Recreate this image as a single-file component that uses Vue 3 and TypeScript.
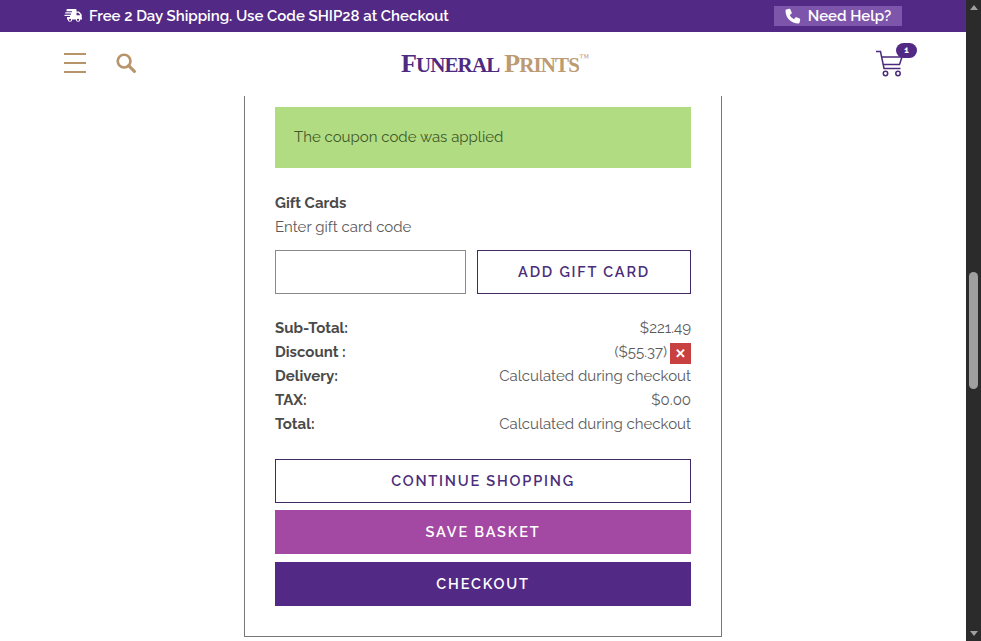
<script setup lang="ts">
const rows = [
  { label: 'Sub-Total:', value: '$221.49' },
  { label: 'Discount :', value: '($55.37)', remove: true },
  { label: 'Delivery:', value: 'Calculated during checkout' },
  { label: 'TAX:', value: '$0.00' },
  { label: 'Total:', value: 'Calculated during checkout' },
]
</script>

<template>
  <div class="window">
    <div class="page">
      <div class="topbar">
        <div class="ship">
          <svg class="truck" width="18" height="14" viewBox="0 0 18 14"><path fill="#fff" d="M3.500 0h8c.6 0 1 .4 1 1v1.500h2c.4 0 .7.100 1 .4l1.800 2c.2.300.4.600.4 1V9h.3v1.500h-1.700a2.200 2.200 0 0 1-4.400 0H8.200a2.200 2.200 0 0 1-4.400 0H3v-2.500h3v-1H.5V5.700H7V4.600H1.300V3.300H8V2.200H2.500V1c0-.6.400-1 1-1z"/><circle cx="6" cy="10.800" r="1.100" fill="#522a85"/><circle cx="14" cy="10.800" r="1.100" fill="#522a85"/><path fill="#522a85" d="M12.500 3.800h1.800l1.700 1.900v.5h-3.500z"/></svg>
          <span>Free 2 Day Shipping. Use Code SHIP28 at Checkout</span>
        </div>
        <div class="help">
          <svg width="16" height="16" viewBox="0 0 16 16"><path fill="#fff" d="M4.200.8 1.300 1.500C.8 1.600.5 2 .5 2.500.5 10 6 15.500 13.500 15.500c.5 0 .9-.3 1-.8l.7-2.900c.1-.5-.1-1-.6-1.200l-3.100-1.300c-.4-.2-.9-.1-1.200.3L9 11.200C6.900 10.100 5.900 9.100 4.800 7l1.600-1.300c.4-.3.500-.8.300-1.200L5.400 1.400C5.200.9 4.700.7 4.200.8z"/></svg>
          <span>Need Help?</span>
        </div>
      </div>
      <header class="header">
        <div class="left-icons">
          <div class="burger"><i></i><i></i><i></i></div>
          <svg class="search" width="20" height="20" viewBox="0 0 21 21"><circle cx="8.500" cy="8.500" r="6.700" fill="none" stroke="#b8946a" stroke-width="2.800"/><path d="m13.300 13.300 6 6" stroke="#b8946a" stroke-width="3.200" stroke-linecap="round"/></svg>
        </div>
        <div class="logo">
          <span class="p">F<small>UNERAL</small></span>
          <span class="g">P<small>RINTS</small><sup>™</sup></span>
        </div>
        <div class="cart">
          <svg width="30" height="28" viewBox="0 0 30 28" fill="none" stroke="#4b2a7b" stroke-width="1.500"><path d="M1 1.500h4.500l3.500 17h16.500M7 7h20l-2.500 7.500H8.500"/><circle cx="10.500" cy="23.500" r="2.200"/><circle cx="23" cy="23.500" r="2.200"/></svg>
          <span class="badge">1</span>
        </div>
      </header>
      <main class="main">
        <section class="card">
          <div class="notice">The coupon code was applied</div>
          <div class="gift-title">Gift Cards</div>
          <div class="gift-sub">Enter gift card code</div>
          <div class="gift-row">
            <input class="gift-input" type="text" />
            <button class="btn outline gift-btn">ADD GIFT CARD</button>
          </div>
          <div class="totals">
            <div v-for="row in rows" :key="row.label" class="row">
              <strong>{{ row.label }}</strong>
              <span class="val">{{ row.value }}<span v-if="row.remove" class="remove">✕</span></span>
            </div>
          </div>
          <div class="actions">
            <button class="btn outline">CONTINUE SHOPPING</button>
            <button class="btn save">SAVE BASKET</button>
            <button class="btn checkout">CHECKOUT</button>
          </div>
        </section>
      </main>
    </div>
    <div class="scrollbar">
      <div class="arrow up"></div>
      <div class="track"><div class="thumb"></div></div>
      <div class="arrow down"></div>
    </div>
  </div>
</template>

<style>
html, body { margin: 0; overflow: hidden; }
</style>

<style scoped>
.window { width: 981px; height: 641px; display: flex; overflow: hidden; background: #fff; font-family: Raleway, "Open Sans", Lato, "Liberation Sans", sans-serif; color: #4a4a4a; }
.page { width: 966px; flex: none; display: flex; flex-direction: column; }
.topbar { height: 32px; flex: none; background: #522a85; color: #fff; display: flex; align-items: center; justify-content: space-between; padding: 0 64px; font: 600 15px Raleway, Lato, sans-serif; }
.ship { display: flex; align-items: center; gap: 7px; }
.help { width: 128px; height: 20px; background: #7d55ab; display: flex; align-items: center; justify-content: center; gap: 7px; }
.header { height: 64px; flex: none; padding: 0 49px 0 64px; display: grid; grid-template-columns: 337px auto 1fr; align-items: center; }
.left-icons { display: flex; align-items: center; gap: 30px; margin-top: -3px; }
.burger { width: 22px; display: flex; flex-direction: column; gap: 7px; }
.burger i { display: block; height: 2px; background: #b8946a; }
.logo { font: 700 26px "Liberation Serif", serif; letter-spacing: -.9px; display: flex; gap: 5px; margin-top: -1px; }
.logo small { font-size: 21px; }
.logo sup { font-size: 10px; font-weight: 400; letter-spacing: 0; vertical-align: 11px; line-height: 0; }
.p { color: #4f2a80; }
.g { color: #bc9a72; }
.cart { width: 40px; height: 38px; position: relative; margin-top: -2px; padding-top: 6px; box-sizing: border-box; justify-self: end; }
.cart svg { margin-left: -2px; }
.badge { position: absolute; right: 0; top: -1px; width: 21px; height: 15px; border-radius: 8px; background: #522a85; color: #fff; font: 700 9px/15px Raleway, sans-serif; text-align: center; }
.main { flex: 1; min-height: 0; display: flex; justify-content: center; overflow: hidden; }
.card { width: 416px; height: fit-content; padding: 11px 30px 30px; border: 1px solid #777; border-top: 0; font-size: 15px; }
.notice { height: 61px; background: #b2dc82; color: #3f5a2b; display: flex; align-items: center; padding-left: 19px; padding-bottom: 2px; box-sizing: border-box; }
.gift-title { margin-top: 25px; font-weight: 700; line-height: 20px; }
.gift-sub { line-height: 20px; margin-top: 4px; color: #5a5a5a; }
.gift-row { display: flex; gap: 11px; margin-top: 13px; }
.gift-input { width: 191px; height: 44px; box-sizing: border-box; border: 1px solid #8a8a8a; padding: 0; }
.btn { box-sizing: border-box; height: 44px; width: 100%; font: 600 14.500px Raleway, "Open Sans", sans-serif; letter-spacing: 1.800px; border: 0; display: block; padding: 0 0 2px; }
.outline { background: #fff; border: 1px solid #3f2a66; color: #4b2d7a; }
.gift-btn { width: 214px; }
.totals { margin-top: 22px; }
.row { display: flex; justify-content: space-between; height: 24px; line-height: 24px; }
.val { display: flex; align-items: center; color: #5a5a5a; }
.remove { width: 21px; height: 21px; margin-left: 3px; margin-top: 3px; background: #c8403f; color: #fff; font-size: 13px; font-weight: 800; display: flex; align-items: center; justify-content: center; }
.actions { margin-top: 23px; display: flex; flex-direction: column; gap: 8px; }
.save { background: #a349a4; color: #fff; margin-top: -1px; }
.checkout { background: #522a85; color: #fff; }
.scrollbar { width: 15px; flex: none; background: #2b2b2b; display: flex; flex-direction: column; align-items: center; justify-content: space-between; }
.track { flex: 1; width: 100%; padding-top: 257px; box-sizing: border-box; }
.thumb { width: 9px; height: 117px; margin: 0 auto; border-radius: 5px; background: #9f9f9f; }
.arrow { width: 0; height: 0; margin: 5px 0; border-left: 4px solid transparent; border-right: 4px solid transparent; }
.up { border-bottom: 5px solid #9f9f9f; }
.down { border-top: 5px solid #9f9f9f; }
</style>
